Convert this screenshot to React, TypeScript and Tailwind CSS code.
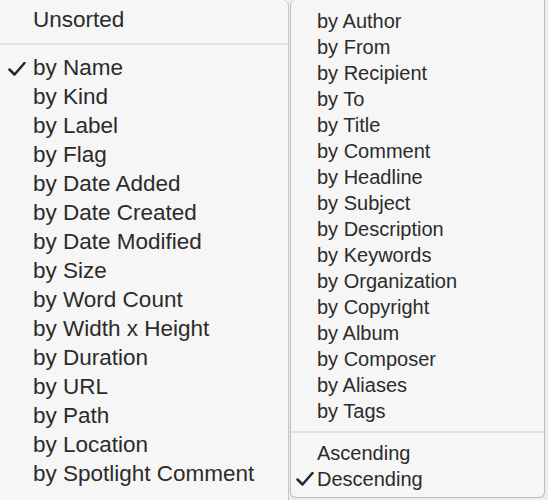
import type { ReactNode } from "react";

// ── Data ───────────────────────────────────────────────────────────────────────

const LEFT_ITEMS: [string, boolean][] = [
  ["by Name", true],
  ["by Kind", false],
  ["by Label", false],
  ["by Flag", false],
  ["by Date Added", false],
  ["by Date Created", false],
  ["by Date Modified", false],
  ["by Size", false],
  ["by Word Count", false],
  ["by Width x Height", false],
  ["by Duration", false],
  ["by URL", false],
  ["by Path", false],
  ["by Location", false],
  ["by Spotlight Comment", false],
];

const RIGHT_ITEMS = [
  "by Author",
  "by From",
  "by Recipient",
  "by To",
  "by Title",
  "by Comment",
  "by Headline",
  "by Subject",
  "by Description",
  "by Keywords",
  "by Organization",
  "by Copyright",
  "by Album",
  "by Composer",
  "by Aliases",
  "by Tags",
];

// ── Sub-components ─────────────────────────────────────────────────────────────

function Check() {
  return (
    <svg viewBox="0 0 18 14" className="h-[14px] w-[18px]" fill="none">
      <path
        d="M1.5 7.5 L6.5 12.5 L16.5 1"
        stroke="#262626"
        strokeWidth="2.5"
        strokeLinecap="round"
        strokeLinejoin="round"
      />
    </svg>
  );
}

function Item({
  label,
  checked = false,
  height,
  indent,
  checkLeft,
}: {
  label: string;
  checked?: boolean;
  height: string;
  indent: string;
  checkLeft: string;
}) {
  return (
    <div className={`relative flex items-center ${height} ${indent}`}>
      {checked && <span className={`absolute top-1/2 -translate-y-1/2 ${checkLeft}`}><Check /></span>}
      <span>{label}</span>
    </div>
  );
}

function Separator({ className }: { className: string }): ReactNode {
  return <div className={`h-[2px] bg-[#e1e1e1] ${className}`} />;
}

// ── Page ───────────────────────────────────────────────────────────────────────

export default function App() {
  return (
    <div className="flex h-[500px] w-[548px] items-start overflow-hidden bg-[#ececec] font-['Liberation_Sans',Arial,sans-serif] leading-none text-[#2b2b2b]">
      {/* Main sort menu */}
      <div className="h-[500px] w-[289px] shrink-0 rounded-tr-[6px] border-r border-[#c6c6c6] bg-[#f6f6f6] pt-[6px] text-[22.5px]">
        <Item label="Unsorted" height="h-[29px]" indent="pl-[33px]" checkLeft="left-[8px]" />
        <Separator className="mb-[9px] mt-[8px]" />
        {LEFT_ITEMS.map(([label, checked]) => (
          <Item
            key={label}
            label={label}
            checked={checked}
            height="h-[29px]"
            indent="pl-[33px]"
            checkLeft="left-[8px]"
          />
        ))}
      </div>

      {/* Submenu */}
      <div className="ml-[1px] h-[498px] w-[255px] shrink-0 rounded-b-[6px] rounded-tl-[6px] border-x border-b border-[#bdbdbd] bg-[#f6f6f6] pt-[8px] text-[20px]">
        {RIGHT_ITEMS.map((label) => (
          <Item key={label} label={label} height="h-[26px]" indent="pl-[26px]" checkLeft="left-[5px]" />
        ))}
        <Separator className="mb-[7px] mt-[7px]" />
        <Item label="Ascending" height="h-[26px]" indent="pl-[26px]" checkLeft="left-[5px]" />
        <Item label="Descending" checked height="h-[26px]" indent="pl-[26px]" checkLeft="left-[5px]" />
      </div>
    </div>
  );
}
